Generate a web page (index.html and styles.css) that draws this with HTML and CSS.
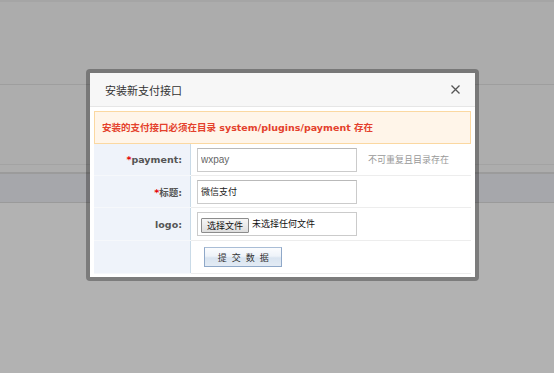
FILE: index.html
```html
<!DOCTYPE html>
<html>
  <head>
    <title>安装新支付接口</title>
    <link rel="stylesheet" href="styles.css">
  </head>
  <body>
    <div class="page">
      <div class="topbar"></div>
      <div class="toolbar"></div>
      <div class="gap"></div>
      <div class="band"></div>
    </div>

    <div class="dialog">
      <div class="dlg-head">
        <span class="dlg-title">安装新支付接口</span>
        <svg class="dlg-close" width="9" height="9" viewBox="0 0 9 9">
          <path d="M0.5 0.5 L8.5 8.5 M8.5 0.5 L0.5 8.5" stroke="#555" stroke-width="1.3" fill="none"/>
        </svg>
      </div>
      <div class="dlg-body">
        <div class="warn">安装的支付接口必须在目录 system/plugins/payment 存在</div>
        <table class="formtable">
          <tr>
            <td class="lbl"><span class="req">*</span>payment:</td>
            <td class="fld">
              <input class="txt txt-en" type="text" value="wxpay">
              <span class="hint">不可重复且目录存在</span>
            </td>
          </tr>
          <tr>
            <td class="lbl"><span class="req">*</span>标题:</td>
            <td class="fld"><input class="txt txt-cn" type="text" value="微信支付"></td>
          </tr>
          <tr class="tall">
            <td class="lbl">logo:</td>
            <td class="fld">
              <div class="filebox">
                <span class="filebtn">选择文件</span>
                <span class="filename">未选择任何文件</span>
              </div>
            </td>
          </tr>
          <tr class="tall">
            <td class="lbl"></td>
            <td class="fld"><button class="submit">提 交 数 据</button></td>
          </tr>
        </table>
      </div>
    </div>
  </body>
</html>
```

FILE: styles.css
```css
body{
  margin: 0;
  background-color: #b2b2b2;
  font-family: "DejaVu Sans", "Noto Sans CJK SC", sans-serif;
  width: 554px;
  height: 373px;
  overflow: hidden;
}

/* page behind the mask */
.topbar{
  height: 82px;
  border-top: 2px solid #a5a5a5;
  border-bottom: 1px solid #9e9e9e;
  background-color: #acacac;
}
.toolbar{
  height: 79px;
  border-bottom: 1px solid #a3a3a3;
  background-color: #adadad;
}
.gap{
  height: 7px;
  border-bottom: 2px solid #9b9b9b;
  background-color: #adadad;
}
.band{
  height: 28px;
  border-bottom: 1px solid #9a9a9a;
  background-color: #a6a7ab;
}

/* dialog */
.dialog{
  position: absolute;
  left: 86px;
  top: 69px;
  width: 385px;
  border: 4px solid rgba(0, 0, 0, 0.3);
  border-radius: 4px;
  background-color: #fff;
  background-clip: padding-box;
}
.dlg-head{
  height: 33px;
  display: flex;
  align-items: center;
  justify-content: space-between;
  padding: 0 15px;
  background-color: #f7f7f7;
  border-bottom: 1px solid #e6e6e6;
}
.dlg-title{
  font-size: 11px;
  color: #333;
  font-family: "Noto Sans CJK SC", sans-serif;
}
.dlg-close{
  display: block;
}
.dlg-body{
  padding: 4px 4px 3px 4px;
}

.warn{
  height: 31px;
  line-height: 31px;
  padding: 0 7px;
  background-color: #fff5e9;
  border: 1px solid #fbd8a1;
  color: #e4412c;
  font-weight: bold;
  font-size: 9.5px;
}

.formtable{
  width: 100%;
  border-collapse: collapse;
}
.formtable td{
  height: 31px;
  padding: 0;
}
.formtable .tall td{
  height: 32px;
}
.lbl{
  width: 88px;
  padding-right: 8px !important;
  text-align: right;
  background-color: #eff3fa;
  border-right: 1px solid #c9dae7;
  border-bottom: 1px solid #f6f8fb;
  color: #555;
  font-weight: bold;
  font-size: 9.5px;
}
.req{
  color: #e60000;
  font-weight: bold;
}
.fld{
  padding-left: 6px !important;
  border-bottom: 1px solid #ededed;
  font-size: 9px;
}

.txt{
  box-sizing: border-box;
  width: 160px;
  height: 24px;
  margin: 0;
  padding: 0 3px;
  border: 1px solid #cbcbcb;
  border-top-color: #b9b9b9;
  vertical-align: middle;
  outline: none;
}
.txt-en{
  font-family: "Liberation Sans", sans-serif;
  font-size: 10px;
  color: #666;
}
.txt-cn{
  font-family: "Noto Sans CJK SC", sans-serif;
  font-size: 9px;
  color: #222;
}
.hint{
  margin-left: 8px;
  color: #999;
  font-family: "Noto Sans CJK SC", sans-serif;
  vertical-align: middle;
}

.filebox{
  box-sizing: border-box;
  width: 160px;
  height: 24px;
  border: 1px solid #cbcbcb;
  display: flex;
  align-items: center;
  padding-left: 3px;
  font-family: "Noto Sans CJK SC", sans-serif;
}
.filebtn{
  box-sizing: border-box;
  height: 15px;
  width: 48px;
  line-height: 13px;
  text-align: center;
  border: 1px solid #8c8c8c;
  border-radius: 1px;
  background: linear-gradient(#f6f6f6, #dedede);
  color: #111;
  margin-top: 2px;
}
.filename{
  margin-left: 3px;
  color: #111;
  margin-bottom: 2px;
}

.submit{
  margin: 0 0 0 7px;
  width: 78px;
  height: 20px;
  padding: 0 0 0 2px;
  border: 1px solid #8fa8c8;
  border-top-color: #a9bdd6;
  background: linear-gradient(#fbfcfe, #eef3f9 45%, #d9e4f0 55%, #e3ebf4);
  font-family: "Noto Sans CJK SC", sans-serif;
  font-size: 9px;
  letter-spacing: 1.5px;
  color: #333;
  vertical-align: middle;
}
```
